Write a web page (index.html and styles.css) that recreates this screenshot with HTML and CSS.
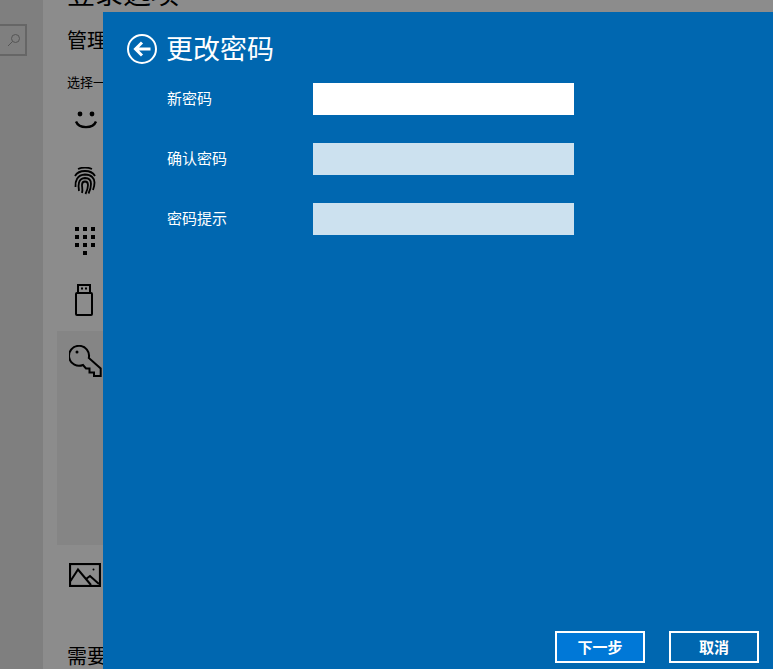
FILE: index.html
```html
<!DOCTYPE html>
<html lang="zh-CN">

<head>
  <meta charset="UTF-8">
  <title>更改密码</title>
  <link rel="stylesheet" href="styles.css">
</head>

<body>
  <div class="app">
    <aside class="sidebar">
      <div class="search-box">
        <svg width="14" height="14" viewBox="0 0 14 14" fill="none" stroke="#555" stroke-width="1">
          <circle cx="8.5" cy="5.5" r="4"></circle>
          <path d="M5.500 8.500L1 13"></path>
        </svg>
      </div>
    </aside>

    <main class="settings">
      <h1>登录选项</h1>
      <h2>管理</h2>
      <p class="hint">选择一</p>

      <div class="option">
        <svg width="24" height="20" viewBox="0 0 24 20" fill="none" stroke="#000" stroke-width="2.400">
          <circle cx="6" cy="4" r="2.400" fill="#000" stroke="none"></circle>
          <circle cx="18" cy="4" r="2.400" fill="#000" stroke="none"></circle>
          <path d="M2 11.500C5 19 19 19 22 11.500"></path>
        </svg>
      </div>
      <div class="option">
        <svg class="nudge" width="22" height="28" viewBox="0 0 22 28" fill="none" stroke="#000" stroke-width="1.800">
          <path d="M4 2C8 .3 14 .3 18 2"></path>
          <path d="M1 9C3 5.500 7 4 11 4S19 5.500 21 9"></path>
          <path d="M1.500 20C1 14 3 8 11 7.500C17.500 7.500 20.500 11.500 20.500 15.500C20.500 18 20 20.500 19 23"></path>
          <path d="M5 24C4 18 4 11.500 11 11C15 11 17 13.500 17 17C17 20 16 23.500 14.500 26.500"></path>
          <path d="M8 26C9 23 8 20 8 18C8 16 9 14.500 11 14.500C13 14.500 14 16 14 18C14 20.500 13 24 11.500 27"></path>
        </svg>
      </div>
      <div class="option">
        <div class="keypad nudge">
          <span></span><span></span><span></span>
          <span></span><span></span><span></span>
          <span></span><span></span><span></span>
          <span class="zero"></span>
        </div>
      </div>
      <div class="option option-usb">
        <svg width="18" height="32" viewBox="0 0 18 32" fill="none" stroke="#000" stroke-width="2">
          <rect x="1" y="9" width="16" height="22" rx="1"></rect>
          <rect x="3" y="1" width="12" height="8"></rect>
          <path d="M6 4.500h2M10 4.500h2"></path>
        </svg>
      </div>
      <div class="option option-selected">
        <svg width="33" height="33" viewBox="0 0 33 33" fill="none" stroke="#000" stroke-width="2">
          <path d="M19.800 13A10 10 0 1 0 14 20L17 23.500H20.500V27.500H25V31H31.700V23.500Z"></path>
          <circle cx="8" cy="7" r="1.500" fill="#000" stroke="none"></circle>
        </svg>
      </div>
      <div class="option option-picture">
        <svg width="32" height="24" viewBox="0 0 32 24" fill="none" stroke="#000" stroke-width="2">
          <rect x="1" y="1" width="30" height="22" stroke-width="2.200"></rect>
          <path d="M1.500 18L9 6.500L22 22"></path>
          <path d="M17 16L21 13L30 21"></path>
          <circle cx="24.500" cy="6.500" r="1" fill="#000" stroke="none"></circle>
        </svg>
      </div>

      <h2 class="need-more">需要</h2>
    </main>

    <section class="dialog">
      <header class="dialog-title">
        <svg width="32" height="32" viewBox="0 0 32 32" fill="none" stroke="#fff">
          <circle cx="16" cy="16" r="14" stroke-width="2"></circle>
          <path d="M24.500 16H10M16 9.500L9.500 16L16 22.500" stroke-width="3"></path>
        </svg>
        <h3>更改密码</h3>
      </header>

      <form class="fields">
        <div class="field">
          <label for="newPassword">新密码</label>
          <input type="password" id="newPassword" class="input-active">
        </div>
        <div class="field">
          <label for="confirmPassword">确认密码</label>
          <input type="password" id="confirmPassword">
        </div>
        <div class="field">
          <label for="passwordHint">密码提示</label>
          <input type="text" id="passwordHint">
        </div>
      </form>

      <footer class="actions">
        <button type="button" class="btn btn-primary">下一步</button>
        <button type="button" class="btn">取消</button>
      </footer>
    </section>
  </div>
</body>

</html>
```

FILE: styles.css
```css
html,
body {
  height: 100%;
  margin: 0;
  padding: 0;
  overflow: hidden;
}

body {
  font-family: "Noto Sans CJK SC", "Liberation Sans", sans-serif;
}

.app {
  position: relative;
  display: flex;
  height: 669px;
  overflow: hidden;
  background-color: #8c8c8c;
}

.sidebar {
  flex: 0 0 43px;
  background-color: #7f7f7f;
}

.search-box {
  display: flex;
  align-items: center;
  justify-content: flex-end;
  box-sizing: border-box;
  width: 27px;
  height: 32px;
  margin-top: 24px;
  padding-right: 4px;
  border: 2px solid #666;
  border-left: none;
}

.settings {
  flex: 1;
  min-width: 0;
  padding-left: 14px;
  white-space: nowrap;
}

.settings h1 {
  margin: -20px 0 0 10px;
  height: 24px;
  font-size: 28px;
  font-weight: 400;
  line-height: 24px;
  color: #000;
}

.settings h2 {
  margin: 21px 0 0 10px;
  height: 30px;
  font-size: 20px;
  font-weight: 400;
  line-height: 30px;
  color: #000;
}

.hint {
  margin: 19px 0 0 10px;
  height: 16px;
  font-size: 13px;
  line-height: 16px;
  color: #000;
}

.option {
  display: flex;
  align-items: center;
  width: 46px;
  height: 60px;
  padding-left: 17px;
  box-sizing: border-box;
}

.option-usb {
  padding-left: 18px;
}

.option-selected {
  align-items: flex-start;
  height: 214px;
  margin-top: 1px;
  padding-left: 12px;
  padding-top: 14px;
  background-color: #858585;
}

.option-picture {
  padding-left: 12px;
}

.nudge {
  margin-top: 2px;
}

.keypad {
  display: grid;
  grid-template-columns: repeat(3, 4px);
  gap: 4px;
  margin-left: 1px;
}

.keypad span {
  width: 4px;
  height: 4px;
  background-color: #000;
}

.keypad .zero {
  grid-column: 2;
}

.settings .need-more {
  margin-top: 36px;
}

/* dialog sits on top of the settings page */
.dialog {
  position: absolute;
  top: 12px;
  left: 103px;
  right: 0;
  bottom: 0;
  display: flex;
  flex-direction: column;
  background-color: #0067b0;
  color: #fff;
}

.dialog-title {
  display: flex;
  align-items: center;
  gap: 8px;
  height: 36px;
  margin: 19px 0 0 23px;
}

.dialog-title h3 {
  margin: -3px 0 0;
  font-size: 27px;
  font-weight: 400;
  line-height: 36px;
}

.fields {
  display: flex;
  flex-direction: column;
  gap: 28px;
  margin: 16px 0 0 64px;
}

.field {
  display: flex;
  align-items: flex-start;
  height: 32px;
}

.field label {
  flex: 0 0 146px;
  font-size: 15px;
  line-height: 30px;
}

.field input {
  box-sizing: border-box;
  width: 261px;
  height: 32px;
  padding: 0 8px;
  border: none;
  border-radius: 0;
  background-color: #cce1ef;
}

.field input.input-active {
  background-color: #fff;
}

.actions {
  display: flex;
  justify-content: flex-end;
  gap: 24px;
  margin-top: auto;
  padding: 0 14px 6px 0;
}

.btn {
  width: 90px;
  height: 32px;
  padding: 0;
  border: 2px solid #fff;
  background-color: transparent;
  color: #fff;
  font-family: inherit;
  font-size: 15px;
  font-weight: 700;
  line-height: 26px;
}

.btn-primary {
  background-color: #0078d7;
}
```
